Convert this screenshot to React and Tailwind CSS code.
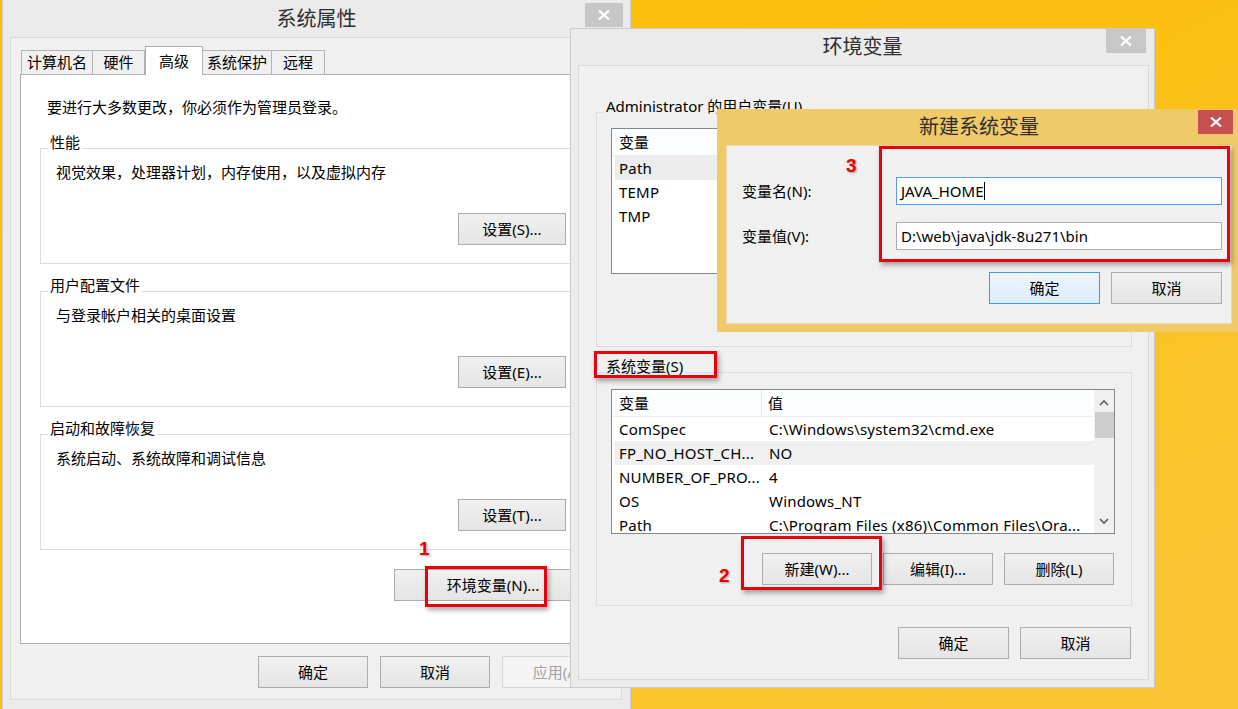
import React from 'react';

const FONT = "font-[family-name:'Noto_Sans','Noto_Sans_CJK_SC',sans-serif]";

function Btn({ label, w = 'w-[110px]', primary, disabled }) {
  return (
    <div
      className={`${w} h-[32px] flex items-center justify-center text-[15px] border bg-gradient-to-b ${
        primary
          ? 'border-[#3c9ae8] from-[#eef5fc] to-[#dcecfc] text-black'
          : disabled
          ? 'border-[#d5d5d5] from-[#f4f4f4] to-[#f4f4f4] text-[#a3a3a3]'
          : 'border-[#acacac] from-[#f0f0f0] to-[#e5e5e5] text-black'
      }`}
    >
      {label}
    </div>
  );
}

function CloseBtn({ className }) {
  return (
    <div className={`absolute flex items-center justify-center ${className}`}>
      <svg width="12" height="10" viewBox="0 0 12 10">
        <path d="M1 0.5 L11 9.5 M11 0.5 L1 9.5" stroke="#fff" strokeWidth="2.2" />
      </svg>
    </div>
  );
}

function Group({ label, labelBg = 'bg-white', className, children }) {
  return (
    <div className={`relative border border-[#dcdcdc] ${className}`}>
      <span className={`absolute top-[-17px] left-[7px] px-[2px] leading-[20px] text-[15px] ${labelBg}`}>
        {label}
      </span>
      {children}
    </div>
  );
}

function RedBox({ className }) {
  return (
    <div
      className={`absolute border-[3px] border-[#e8000b] shadow-[2px_3px_5px_rgba(0,0,0,0.35)] ${className}`}
    />
  );
}

function RedNum({ n, className }) {
  return (
    <div
      className={`absolute font-['Liberation_Sans',sans-serif] font-bold text-[19px] leading-none text-[#ee0000] [text-shadow:1px_1px_2px_rgba(0,0,0,0.35)] ${className}`}
    >
      {n}
    </div>
  );
}

function SystemProps() {
  const tabs = [
    { t: '计算机名', w: 'w-[72px]' },
    { t: '硬件', w: 'w-[53px]' },
    { t: '高级', w: 'w-[58px]', active: true },
    { t: '系统保护', w: 'w-[70px]' },
    { t: '远程', w: 'w-[54px]' },
  ];
  const groups = [
    { label: '性能', text: '视觉效果，处理器计划，内存使用，以及虚拟内存', btn: '设置(S)...' },
    { label: '用户配置文件', text: '与登录帐户相关的桌面设置', btn: '设置(E)...' },
    { label: '启动和故障恢复', text: '系统启动、系统故障和调试信息', btn: '设置(T)...' },
  ];
  return (
    <div className="absolute left-[2px] top-0 w-[629px] h-[720px] bg-[#ebebeb] border-x border-[#cfcfcf]">
      <div className="h-[37px] flex items-center justify-center text-[20px] text-[#2e2e2e]">系统属性</div>
      <CloseBtn className="right-[7px] top-[3px] w-[38px] h-[24px] bg-[#c7c7c7]" />
      <div className="ml-[7px] w-[612px] h-[663px] border border-[#d9d9d9] bg-[#f0f0f0] px-[9px] pt-[8px]">
        <div className="relative z-10 flex items-end h-[29px] -mb-px pl-[2px]">
          {tabs.map((tab) =>
            tab.active ? (
              <div
                key={tab.t}
                className={`${tab.w} h-[29px] bg-white border border-b-0 border-[#adadad] text-[15px] flex justify-center pt-[3px]`}
              >
                {tab.t}
              </div>
            ) : (
              <div
                key={tab.t}
                className={`${tab.w} h-[25px] bg-[#f0f0f0] border border-[#b4b4b4] -ml-px text-[15px] flex items-center justify-center`}
              >
                {tab.t}
              </div>
            )
          )}
        </div>
        <div className="h-[570px] border border-[#adadad] bg-white px-[19px] flex flex-col">
          <div className="mt-[22px] ml-[7px] leading-[20px] text-[15px]">要进行大多数更改，你必须作为管理员登录。</div>
          {groups.map((g, i) => (
            <Group key={g.label} label={g.label} className={`h-[116px] ${i === 0 ? 'mt-[31px]' : 'mt-[27px]'}`}>
              <div className="pt-[13px] pl-[15px] leading-[20px] text-[15px]">{g.text}</div>
              <div className="flex justify-end pr-[25px] mt-[31px]">
                <Btn label={g.btn} w="w-[108px]" />
              </div>
            </Group>
          ))}
          <div className="mt-[19px] flex justify-end">
            <Btn label="环境变量(N)..." w="w-[198px]" />
          </div>
        </div>
        <div className="mt-[12px] flex justify-end gap-[12px]">
          <Btn label="确定" />
          <Btn label="取消" />
          <Btn label="应用(A)" disabled />
        </div>
      </div>
    </div>
  );
}

function ListHeader({ second }) {
  return (
    <div className="h-[27px] flex bg-[#fcfdfe] border-b border-[#e7eef7] text-[15px]">
      <div className="w-[150px] pl-[7px] flex items-center border-r border-[#e5e5e5]">变量</div>
      {second && <div className="pl-[6px] flex items-center">值</div>}
    </div>
  );
}

function EnvVars() {
  const sys = [
    ['ComSpec', 'C:\\Windows\\system32\\cmd.exe'],
    ['FP_NO_HOST_CH...', 'NO', true],
    ['NUMBER_OF_PRO...', '4'],
    ['OS', 'Windows_NT'],
    ['Path', 'C:\\Program Files (x86)\\Common Files\\Ora...'],
  ];
  return (
    <div className="absolute left-[570px] top-[28px] w-[585px] h-[660px] bg-[#ebebeb] border border-[#cacaca]">
      <div className="h-[36px] flex items-center justify-center text-[20px] text-[#2e2e2e]">环境变量</div>
      <CloseBtn className="right-[8px] top-0 w-[40px] h-[24px] bg-[#c7c7c7]" />
      <div className="ml-[7px] w-[571px] h-[615px] border border-[#d9d9d9] bg-[#f0f0f0] px-[17px] pt-[46px]">
        <Group label="Administrator 的用户变量(U)" labelBg="bg-[#f0f0f0]" className="w-[536px] h-[235px]">
          <div className="mt-[15px] ml-[14px] w-[504px] h-[146px] border border-[#828790] bg-white">
            <ListHeader />
            {['Path', 'TEMP', 'TMP'].map((n, i) => (
              <div
                key={n}
                className={`h-[24px] mx-[3px] pl-[4px] flex items-center text-[15px] tracking-[0.2px] ${i === 0 ? 'bg-[#ececec]' : ''}`}
              >
                {n}
              </div>
            ))}
          </div>
        </Group>
        <Group label="系统变量(S)" labelBg="bg-[#f0f0f0]" className="mt-[25px] w-[536px] h-[234px]">
          <div className="mt-[16px] ml-[14px] w-[504px] h-[145px] border border-[#828790] bg-white flex overflow-hidden">
            <div className="flex-1 min-w-0">
              <ListHeader second />
              {sys.map(([k, v, hl]) => (
                <div
                  key={k}
                  className={`h-[24px] ml-[2px] flex items-center text-[15px] tracking-[0.2px] whitespace-nowrap ${hl ? 'bg-[#f0f0f0]' : ''}`}
                >
                  <div className="w-[148px] pl-[5px]">{k}</div>
                  <div className="pl-[7px]">{v}</div>
                </div>
              ))}
            </div>
            <div className="w-[20px] bg-[#f0f0f0] flex flex-col items-center">
              <svg className="mt-[9px]" width="10" height="7" viewBox="0 0 10 7">
                <path d="M1 6 L5 2 L9 6" stroke="#606060" strokeWidth="1.6" fill="none" />
              </svg>
              <div className="mt-[6px] w-[19px] h-[26px] bg-[#cdcdcd]" />
              <svg className="mt-auto mb-[8px]" width="10" height="7" viewBox="0 0 10 7">
                <path d="M1 1 L5 5 L9 1" stroke="#606060" strokeWidth="1.6" fill="none" />
              </svg>
            </div>
          </div>
          <div className="mt-[19px] mr-[17px] flex justify-end gap-[11px]">
            <Btn label="新建(W)..." />
            <Btn label="编辑(I)..." />
            <Btn label="删除(L)" />
          </div>
        </Group>
        <div className="mt-[21px] flex justify-end gap-[11px]">
          <Btn label="确定" w="w-[111px]" />
          <Btn label="取消" w="w-[111px]" />
        </div>
      </div>
    </div>
  );
}

function NewVar() {
  return (
    <div className="absolute left-[717px] top-[109px] w-[524px] h-[223px] bg-[#f0c969]">
      <div className="h-[36px] flex items-center justify-center text-[20px] text-[#2e2e2e]">新建系统变量</div>
      <CloseBtn className="right-[8px] top-[1px] w-[35px] h-[24px] bg-[#c75050]" />
      <div className="ml-[9px] w-[506px] h-[179px] bg-[#f0f0f0] border border-[#e9d9ad] pl-[15px] pt-[31px]">
        <div className="flex items-center h-[28px]">
          <div className="w-[154px] text-[15px]">变量名(N):</div>
          <div className="w-[326px] h-[28px] border border-[#569de5] bg-white flex items-center pl-[4px] text-[15px]">
            JAVA_HOME<span className="inline-block w-px h-[18px] bg-black" />
          </div>
        </div>
        <div className="flex items-center h-[28px] mt-[17px]">
          <div className="w-[154px] text-[15px]">变量值(V):</div>
          <div className="w-[326px] h-[28px] border border-[#abadb3] bg-white flex items-center pl-[4px] text-[15px]">
            D:\web\java\jdk-8u271\bin
          </div>
        </div>
        <div className="mt-[22px] flex justify-end gap-[11px] pr-[9px]">
          <Btn label="确定" w="w-[111px]" primary />
          <Btn label="取消" w="w-[111px]" />
        </div>
      </div>
    </div>
  );
}

export default function App() {
  return (
    <div
      className={`${FONT} relative w-[1238px] h-[709px] overflow-hidden bg-gradient-to-br from-[#fdbd04] via-[#fcc012] to-[#f8c636] text-black`}
    >
      <SystemProps />
      <EnvVars />
      <NewVar />
      <RedBox className="left-[425px] top-[566px] w-[122px] h-[41px]" />
      <RedNum n="1" className="left-[419px] top-[539px]" />
      <RedBox className="left-[594px] top-[351px] w-[123px] h-[27px]" />
      <RedBox className="left-[741px] top-[536px] w-[141px] h-[54px]" />
      <RedNum n="2" className="left-[719px] top-[566px]" />
      <RedBox className="left-[879px] top-[146px] w-[351px] h-[116px]" />
      <RedNum n="3" className="left-[846px] top-[156px]" />
    </div>
  );
}
